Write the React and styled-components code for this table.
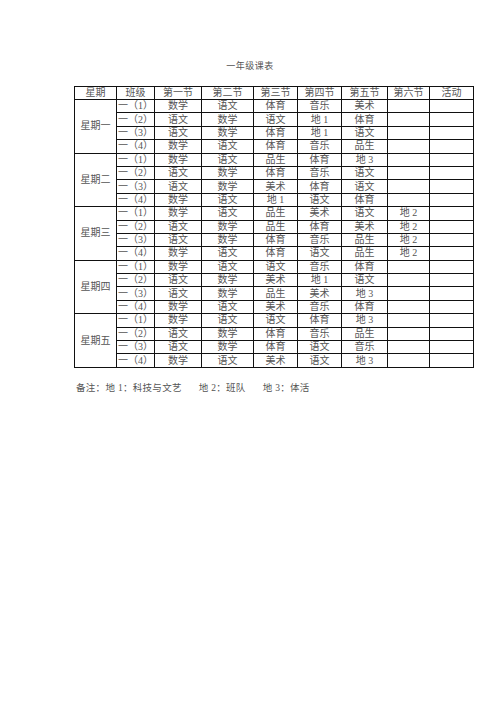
import React from 'react';
import styled, { createGlobalStyle } from 'styled-components';

const GlobalStyle = createGlobalStyle`
  html, body {
    margin: 0;
    padding: 0;
    background: #fff;
  }
  body {
    font-family: "Liberation Serif", "Noto Sans CJK SC", serif;
    color: #555;
  }
`;

const Page = styled.div`
  width: 496px;
  height: 702px;
  padding: 61px 0 0 74px;
  box-sizing: border-box;
`;

const Title = styled.div`
  width: 352px;
  text-align: center;
  font-size: 9px;
  line-height: 10px;
  margin-bottom: 15px;
  letter-spacing: 0.5px;
`;

const Table = styled.table`
  border-collapse: collapse;
  table-layout: fixed;
  width: 399px;
  font-size: 10px;
  border: 1px solid #111;
`;

const Cell = styled.td`
  border: 1px solid #111;
  padding: 0;
  height: ${p => (p.$head ? 12 : 12.4)}px;
  line-height: 10px;
  text-align: center;
  vertical-align: middle;
  white-space: nowrap;
  overflow: hidden;
  font-weight: normal;
`;

const Note = styled.div`
  margin-top: 15px;
  margin-left: 2px;
  font-size: 9.5px;
  line-height: 10px;
  display: flex;
  gap: 17px;
  letter-spacing: 0.3px;
`;

const widths = [42, 38, 47, 52, 44, 44, 46, 42, 44];
const heads = ['星期', '班级', '第一节', '第二节', '第三节', '第四节', '第五节', '第六节', '活动'];

const week = [
  {
    day: '星期一',
    rows: [
      ['数学', '语文', '体育', '音乐', '美术', ''],
      ['语文', '数学', '语文', '地 1', '体育', ''],
      ['语文', '数学', '体育', '地 1', '语文', ''],
      ['数学', '语文', '体育', '音乐', '品生', ''],
    ],
  },
  {
    day: '星期二',
    rows: [
      ['数学', '语文', '品生', '体育', '地 3', ''],
      ['语文', '数学', '体育', '音乐', '语文', ''],
      ['语文', '数学', '美术', '体育', '语文', ''],
      ['数学', '语文', '地 1', '语文', '体育', ''],
    ],
  },
  {
    day: '星期三',
    rows: [
      ['数学', '语文', '品生', '美术', '语文', '地 2'],
      ['语文', '数学', '品生', '体育', '美术', '地 2'],
      ['语文', '数学', '体育', '音乐', '品生', '地 2'],
      ['数学', '语文', '体育', '语文', '品生', '地 2'],
    ],
  },
  {
    day: '星期四',
    rows: [
      ['数学', '语文', '语文', '音乐', '体育', ''],
      ['语文', '数学', '美术', '地 1', '语文', ''],
      ['语文', '数学', '品生', '美术', '地 3', ''],
      ['数学', '语文', '美术', '音乐', '体育', ''],
    ],
  },
  {
    day: '星期五',
    rows: [
      ['数学', '语文', '语文', '体育', '地 3', ''],
      ['语文', '数学', '体育', '音乐', '品生', ''],
      ['语文', '数学', '体育', '语文', '音乐', ''],
      ['数学', '语文', '美术', '语文', '地 3', ''],
    ],
  },
];

export default function App() {
  return (
    <Page>
      <GlobalStyle />
      <Title>一年级课表</Title>
      <Table>
        <colgroup>
          {widths.map((w, i) => <col key={i} style={{ width: w }} />)}
        </colgroup>
        <thead>
          <tr>
            {heads.map(h => <Cell as="th" $head key={h}>{h}</Cell>)}
          </tr>
        </thead>
        <tbody>
          {week.map(d =>
            d.rows.map((r, i) => (
              <tr key={d.day + i}>
                {i === 0 && <Cell rowSpan={4}>{d.day}</Cell>}
                <Cell>一（{i + 1}）</Cell>
                {r.map((s, j) => <Cell key={j}>{s}</Cell>)}
                <Cell />
              </tr>
            ))
          )}
        </tbody>
      </Table>
      <Note>
        <span>备注：地 1：科技与文艺</span>
        <span>地 2：班队</span>
        <span>地 3：体活</span>
      </Note>
    </Page>
  );
}
